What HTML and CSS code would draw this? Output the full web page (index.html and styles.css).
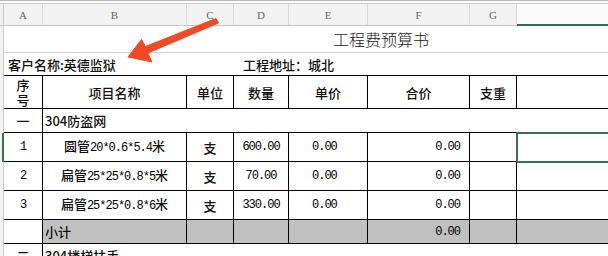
FILE: index.html
```html
<!DOCTYPE html>
<html lang="zh">
<head>
<meta charset="utf-8">
<title>工程费预算书</title>
<link rel="stylesheet" href="styles.css">
</head>
<body>
<div class="sheet">
  <div class="topbar"></div>

  <div class="row colhead">
    <div class="rh"></div>
    <div class="ch">A</div>
    <div class="ch">B</div>
    <div class="ch">C</div>
    <div class="ch">D</div>
    <div class="ch">E</div>
    <div class="ch">F</div>
    <div class="ch">G</div>
    <div class="ch active"></div>
  </div>

  <div class="row title-row">
    <div class="rh"></div>
    <div class="title">工程费预算书</div>
  </div>

  <div class="row info-row">
    <div class="rh"></div>
    <div class="info client">客户名称:英德监狱</div>
    <div class="info addr">工程地址：城北</div>
  </div>

  <div class="row head-row">
    <div class="rh"></div>
    <div class="c tall"><span class="stack">序</span><span class="stack">号</span></div>
    <div class="c">项目名称</div>
    <div class="c">单位</div>
    <div class="c">数量</div>
    <div class="c">单价</div>
    <div class="c">合价</div>
    <div class="c">支重</div>
    <div class="c"></div>
  </div>

  <div class="row group">
    <div class="rh"></div>
    <div class="c">一</div>
    <div class="c merged">304防盗网</div>
  </div>

  <div class="row item">
    <div class="rh sel"></div>
    <div class="c n">1</div>
    <div class="c"><span class="nm">圆管<span class="n">20*0.6*5.4</span>米</span></div>
    <div class="c">支</div>
    <div class="c n">600.00</div>
    <div class="c n price">0.00</div>
    <div class="c n total">0.00</div>
    <div class="c"></div>
    <div class="c selected"></div>
  </div>

  <div class="row item">
    <div class="rh"></div>
    <div class="c n">2</div>
    <div class="c"><span class="nm">扁管<span class="n">25*25*0.8*5</span>米</span></div>
    <div class="c">支</div>
    <div class="c n">70.00</div>
    <div class="c n price">0.00</div>
    <div class="c n total">0.00</div>
    <div class="c"></div>
    <div class="c"></div>
  </div>

  <div class="row item">
    <div class="rh"></div>
    <div class="c n">3</div>
    <div class="c"><span class="nm">扁管<span class="n">25*25*0.8*6</span>米</span></div>
    <div class="c">支</div>
    <div class="c n">330.00</div>
    <div class="c n price">0.00</div>
    <div class="c n total">0.00</div>
    <div class="c"></div>
    <div class="c"></div>
  </div>

  <div class="row subtotal">
    <div class="rh"></div>
    <div class="c plain"></div>
    <div class="c left">小计</div>
    <div class="c"></div>
    <div class="c"></div>
    <div class="c"></div>
    <div class="c n total">0.00</div>
    <div class="c"></div>
    <div class="c"></div>
  </div>

  <div class="row group">
    <div class="rh"></div>
    <div class="c">二</div>
    <div class="c merged">304楼梯扶手</div>
  </div>
</div>

<svg class="arrow" width="608" height="256" viewBox="0 0 608 256" aria-hidden="true">
  <polygon points="128,57 141.5,39.5 145.5,46.5 216,18.5 218.5,23 148,53 152,62" fill="#f04a25" stroke="#f04a25" stroke-width="1" stroke-linejoin="round"/>
</svg>
</body>
</html>
```

FILE: styles.css
```css
html, body {
  margin: 0;
  padding: 0;
  background: #ffffff;
}

body {
  width: 608px;
  height: 256px;
  overflow: hidden;
  position: relative;
  font-family: "Noto Sans CJK SC", "Noto Sans", sans-serif;
  color: #111111;
}

.sheet {
  width: 637px;
}

.topbar {
  height: 2px;
  border-top: 1px solid #b9b9b9;
  border-bottom: 1px solid #cfcfcf;
  background: #fafafa;
}

.row {
  display: grid;
  grid-template-columns: 4px 39px 144px 47px 55px 79px 102px 47px 120px;
  box-sizing: border-box;
}

.rh {
  background: #f1f1f1;
  border-right: 1px solid #cccccc;
  box-sizing: border-box;
}

.rh.sel {
  border-right: 2px solid #3b6e55;
}

/* column letters */
.colhead {
  height: 22px;
}

.colhead .rh {
  border-bottom: 1px solid #c6c6c6;
}

.ch {
  box-sizing: border-box;
  background: #f2f2f2;
  border-right: 1px solid #d9d9d9;
  border-bottom: 1px solid #c6c6c6;
  display: flex;
  align-items: center;
  justify-content: center;
  font-family: "Liberation Serif", serif;
  font-size: 11px;
  color: #666666;
}

.ch.active {
  background: #fbfbfb;
  border-bottom: 2px solid #2f6b4c;
}

/* title */
.title-row {
  height: 27px;
}

.title {
  grid-column: span 8;
  box-sizing: border-box;
  border-bottom: 1px solid #d4d4d4;
  display: flex;
  align-items: center;
  padding-left: 329px;
  font-size: 16px;
  font-weight: 300;
  color: #1a1a1a;
}

/* client / address */
.info-row {
  height: 23px;
}

.info {
  box-sizing: border-box;
  border-bottom: 1px solid #000000;
  display: flex;
  align-items: center;
  font-size: 13px;
  font-weight: 500;
}

.client {
  grid-column: span 3;
  padding-left: 4px;
}

.addr {
  grid-column: span 5;
  padding-left: 9px;
}

/* table cells */
.c {
  box-sizing: border-box;
  border-right: 1px solid #000000;
  border-bottom: 1px solid #000000;
  display: flex;
  align-items: center;
  justify-content: center;
  font-size: 13px;
  font-weight: 500;
  white-space: nowrap;
  overflow: hidden;
}

.head-row {
  height: 33px;
}

.c.tall {
  flex-direction: column;
  gap: 0;
  overflow: visible;
}

.stack {
  display: block;
  height: 15px;
  line-height: 15px;
}

.nm {
  display: block;
  line-height: 18px;
}

.group {
  height: 24px;
}

.merged {
  grid-column: span 7;
  justify-content: flex-start;
  padding-left: 2px;
  border-right: none;
}

.item {
  height: 29px;
}

.n {
  font-family: "Liberation Mono", monospace;
  font-size: 12px;
  font-weight: 400;
  letter-spacing: -1px;
  color: #000000;
}

.price {
  justify-content: flex-start;
  padding-left: 23px;
}

.total {
  justify-content: flex-end;
  padding-right: 9px;
}

.selected {
  outline: 2px solid #3b6e55;
  outline-offset: -1px;
}

.subtotal {
  height: 24px;
}

.subtotal .c {
  background: #c0c0c0;
}

.subtotal .c.plain {
  background: #ffffff;
}

.left {
  justify-content: flex-start;
  padding-left: 2px;
}

.arrow {
  position: absolute;
  left: 0;
  top: 0;
  pointer-events: none;
}
```
